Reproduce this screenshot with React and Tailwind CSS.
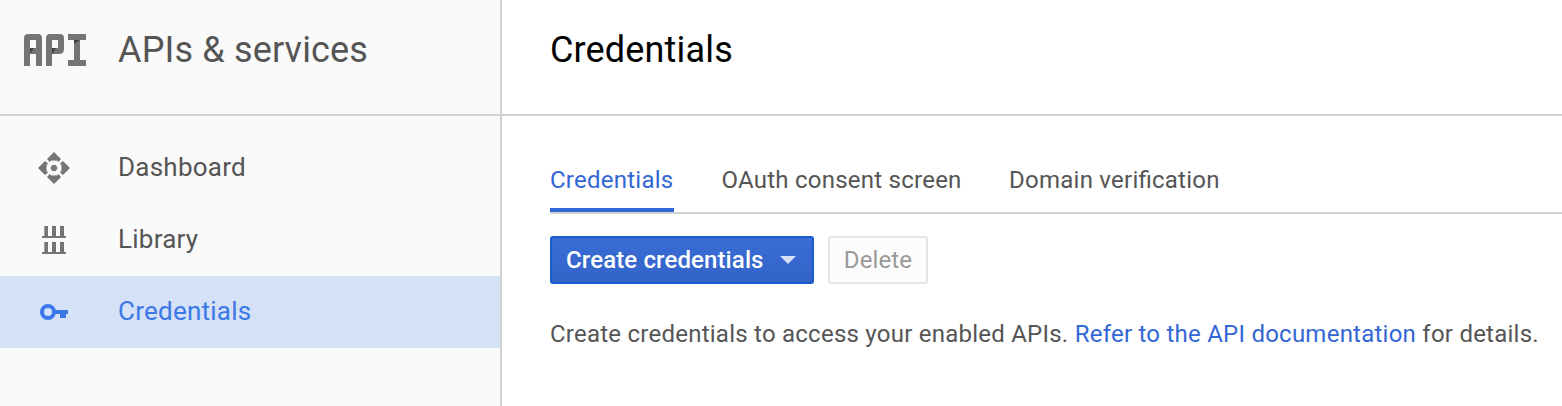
function ApiLogo() {
  return (
    <svg className="block h-8 w-[62px]" viewBox="0 0 62 32">
      <path fill="#757575" fillRule="evenodd" d="M0 32V4Q0 0 4 0H14Q18 0 18 4V32H12V20H6V32ZM6 6V14H12V6Z" />
      <path fill="#757575" fillRule="evenodd" d="M22 32V4Q22 0 26 0H36Q40 0 40 4V15Q40 20 35 20H28V32H22ZM28 6V14H34V6Z" />
      <path fill="#757575" d="M44 0H62V6H56V26H62V32H44V26H50V6H44Z" />
      <path fill="#424242" d="M6 14H10L6 20ZM28 14H32L28 20ZM50 6H56L50 10Z" />
    </svg>
  );
}

function DashboardIcon() {
  const arm = "M0 -16L7 -9L4.4 -6L3 -7.4L1.6 -7.2L0 -7.8L-1.6 -7.2L-3 -7.4L-4.4 -6L-7 -9Z";
  return (
    <svg className="block size-8" viewBox="-16 -16 32 32" fill="#757575">
      <path d={arm} />
      <path d={arm} transform="rotate(90)" />
      <path d={arm} transform="rotate(180)" />
      <path d={arm} transform="rotate(270)" />
      <path d="M-3.6 0L-1.8 -3H1.8L3.6 0L1.8 3H-1.8Z" />
    </svg>
  );
}

function LibraryIcon() {
  return (
    <svg className="block size-8" viewBox="0 0 32 32">
      <path fill="#757575" d="M6 2H10V12H14V2H18V12H22V2H26V12H28V14H4V12H6ZM6 18H10V28H14V18H18V28H22V18H26V28H28V30H4V28H6Z" />
      <path fill="#9e9e9e" d="M6 2H7V12H6ZM6 18H7V28H6Z" />
    </svg>
  );
}

function KeyIcon() {
  return (
    <svg className="block size-8" viewBox="0 0 32 32">
      <circle cx="10" cy="16" r="6" fill="none" stroke="#3b78e7" strokeWidth="4" />
      <path fill="#3b78e7" d="M17 14H30V18H28V22H22V18H17Z" />
    </svg>
  );
}

const navItems = [
  { label: "Dashboard", Icon: DashboardIcon },
  { label: "Library", Icon: LibraryIcon },
  { label: "Credentials", Icon: KeyIcon, active: true },
];

export default function App() {
  return (
    <div className="flex h-[406px] w-[1562px] overflow-hidden bg-white font-[Roboto,sans-serif] text-[#555]">
      <aside className="w-[502px] shrink-0 border-r-2 border-[#d2d2d2] bg-[#fafafa]">
        <header className="flex h-[116px] items-start border-b-2 border-[#d2d2d2] pl-6">
          <div className="w-[94px] shrink-0 pt-[34px]">
            <ApiLogo />
          </div>
          <h1 className="pt-[29px] text-[36px] leading-[42px] tracking-[0.16px] whitespace-nowrap">APIs &amp; services</h1>
        </header>
        <nav className="pt-4">
          {navItems.map(({ label, Icon, active }) => (
            <a
              key={label}
              className={`flex h-[72px] items-center pl-[38px] ${active ? "bg-[#d5e1f7] text-[#3b78e7]" : ""}`}
            >
              <span className="w-20 shrink-0"><Icon /></span>
              <span className="pb-0.5 text-[26px] leading-8 tracking-[0.24px]">{label}</span>
            </a>
          ))}
        </nav>
      </aside>
      <main className="min-w-0 flex-1">
        <header className="h-[116px] border-b-2 border-[#d2d2d2] pt-[29px] pl-12">
          <h2 className="text-[36px] leading-[42px] tracking-[0.16px] text-black">Credentials</h2>
        </header>
        <div className="pl-12">
          <div className="flex h-[98px] items-end gap-[47.5px] border-b-2 border-[#d2d2d2] text-[24px] leading-7 tracking-[0.24px] whitespace-nowrap">
            <span className="w-[124px] border-b-4 border-[#3367d6] pb-3.5 text-[#3367d6]">Credentials</span>
            <span className="pb-[18px]">OAuth consent screen</span>
            <span className="pb-[18px] [font-feature-settings:'liga']">Domain verification</span>
          </div>
          <div className="mt-[22px] flex gap-3.5 text-[24px] leading-7 tracking-[0.12px]">
            <button className="flex h-12 w-[264px] items-center justify-between rounded-[3px] border-2 border-[#1a5bcb] bg-linear-to-b from-[#396cd6] to-[#3364c8] pr-4 pl-3.5 font-medium whitespace-nowrap text-white">
              Create credentials
              <svg className="block h-2 w-4" viewBox="0 0 16 8"><path fill="#d6e1f5" d="M0 0H16L8 8Z" /></svg>
            </button>
            <button className="flex h-12 w-[100px] items-center justify-center rounded-[3px] border-2 border-[#e5e5e5] bg-[#fcfcfc] text-[#999]">
              Delete
            </button>
          </div>
          <p className="mt-9 text-[24px] leading-7 tracking-[0.24px] whitespace-nowrap">
            Create credentials to access your enabled APIs.{" "}
            <a className="text-[#3367d6]">Refer to the API documentation</a> for details.
          </p>
        </div>
      </main>
    </div>
  );
}
